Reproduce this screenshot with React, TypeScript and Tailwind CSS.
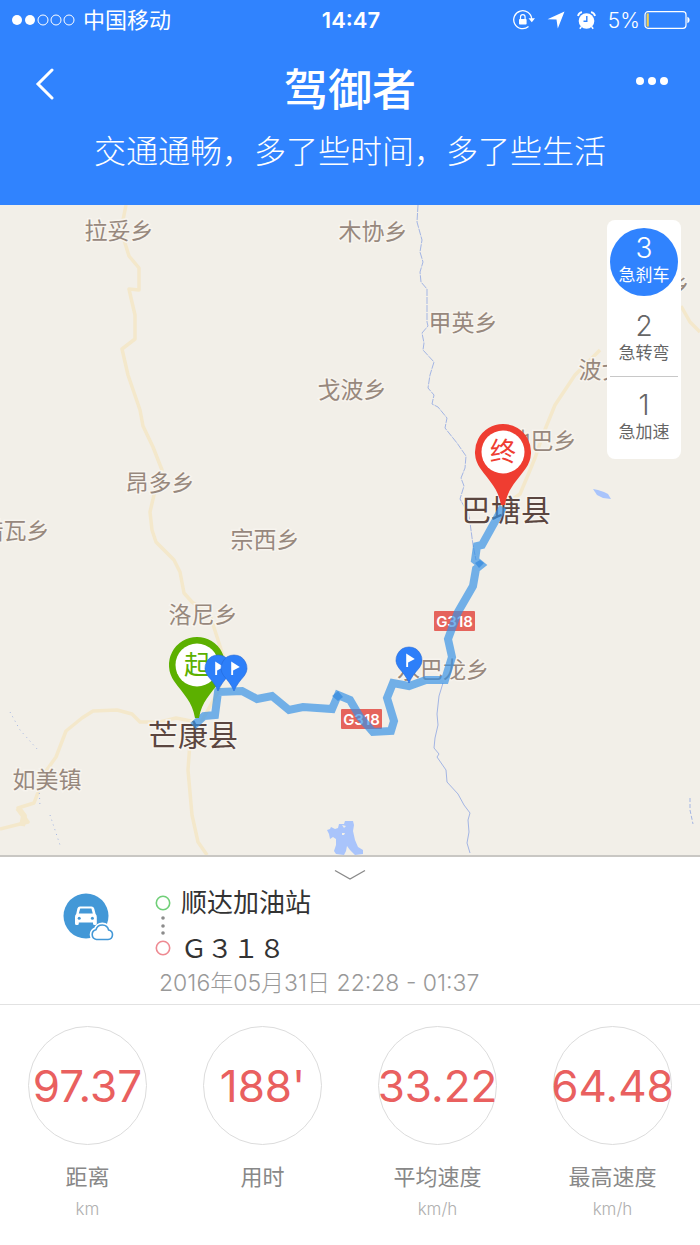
import { useState } from 'react';

const places = [
  { name: '拉妥乡', x: 119, y: 239 },
  { name: '木协乡', x: 373, y: 240 },
  { name: '甲英乡', x: 463, y: 331 },
  { name: '戈波乡', x: 352, y: 398 },
  { name: '波戈乡', x: 613, y: 378 },
  { name: '贡波乡', x: 655, y: 293 },
  { name: '地巴乡', x: 542, y: 449 },
  { name: '昂多乡', x: 160, y: 491 },
  { name: '措瓦乡', x: 15, y: 539 },
  { name: '宗西乡', x: 265, y: 548 },
  { name: '洛尼乡', x: 203, y: 623 },
  { name: '水巴龙乡', x: 443, y: 678 },
  { name: '如美镇', x: 47, y: 788 },
];

const counties = [
  { name: '巴塘县', x: 506, y: 521 },
  { name: '芒康县', x: 193, y: 746 },
];

const events = [
  { count: 3, label: '急刹车' },
  { count: 2, label: '急转弯' },
  { count: 1, label: '急加速' },
];

const stats = [
  { value: '97.37', label: '距离', unit: 'km' },
  { value: "188'", label: '用时', unit: '' },
  { value: '33.22', label: '平均速度', unit: 'km/h' },
  { value: '64.48', label: '最高速度', unit: 'km/h' },
];

function StatusBar() {
  return (
    <div className="grid grid-cols-3 items-center h-10 pl-3 pr-[10px] text-[22px] leading-none">
      <div className="flex items-center gap-2">
        <svg width="63" height="12" viewBox="0 0 63 12" fill="none" stroke="#fff">
          <circle cx="5" cy="6" r="5" fill="#fff" stroke="none" />
          <circle cx="18" cy="6" r="5" fill="#fff" stroke="none" />
          <circle cx="31" cy="6" r="5" />
          <circle cx="44" cy="6" r="5" />
          <circle cx="57" cy="6" r="5" />
        </svg>
        <span>中国移动</span>
      </div>
      <span className="text-center font-semibold">14:47</span>
      <div className="flex items-center justify-end">
        {/* Блокировка поворота */}
        <svg width="22" height="20" viewBox="0 0 22 20" fill="none" stroke="#fff" strokeWidth="1.3">
          <path d="M15.5 16.6 A9 9 0 1 1 18.7 9" />
          <path d="M15.5 8.3 H22 L18.8 12.2 Z" fill="#fff" stroke="none" />
          <rect x="6" y="9" width="7.6" height="5.6" rx="0.8" fill="#fff" stroke="none" />
          <path d="M7.5 9 V7 a2.3 2.3 0 0 1 4.6 0 V9" strokeWidth="1.2" />
        </svg>
        <svg className="ml-3" width="18" height="18" viewBox="0 0 18 18" fill="#fff">
          <path d="M17.5 0.5 L10.8 17.5 L9.5 8.6 L0.5 8.2 Z" />
        </svg>
        {/* Будильник */}
        <svg className="ml-3" width="19" height="19" viewBox="0 0 19 19" fill="none" stroke="#fff">
          <circle cx="9.5" cy="10" r="7.8" fill="#fff" stroke="none" />
          <path d="M9.8 5 V10.3 H6.5" stroke="#3083fe" strokeWidth="1.4" />
          <path d="M1 5 A5 5 0 0 1 5 1.2 M14 1.2 A5 5 0 0 1 18 5" strokeWidth="1.8" />
          <path d="M4.3 15.8 L2.8 17.8 M14.7 15.8 L16.2 17.8" strokeWidth="1.5" />
        </svg>
        <span className="ml-3 text-[21px] font-light">5%</span>
        <svg className="ml-1 shrink-0" width="46" height="18" viewBox="0 0 46 18" fill="none">
          <rect x="1" y="0.7" width="41" height="16.6" rx="3" stroke="#fff" strokeWidth="1.2" />
          <rect x="2.6" y="2.4" width="2.2" height="13.2" fill="#f5d04a" />
          <path d="M43.4 5.8 a3.4 3.4 0 0 1 0 6.4 Z" fill="#fff" />
        </svg>
      </div>
    </div>
  );
}

function Header() {
  return (
    <header className="bg-[#3083fe] text-white h-[205px]">
      <StatusBar />
      <div className="grid grid-cols-[72px_1fr_72px] items-center pt-[14px]">
        <button type="button" aria-label="返回" className="justify-self-end pr-4 pb-3">
          <svg width="22" height="32" viewBox="0 0 22 32" fill="none" stroke="#fff" strokeWidth="3" strokeLinecap="round">
            <path d="M18 2 L4 16 L18 30" />
          </svg>
        </button>
        <h1 className="text-center text-[44px] leading-[72px] font-medium">驾御者</h1>
        <button type="button" aria-label="更多" className="justify-self-start pb-[18px]">
          <svg width="48" height="12" viewBox="0 0 48 12" fill="#fff">
            <circle cx="12" cy="6" r="4" />
            <circle cx="24" cy="6" r="4" />
            <circle cx="36" cy="6" r="4" />
          </svg>
        </button>
      </div>
      <p className="text-center text-[32px] leading-[52px] font-light">交通通畅，多了些时间，多了些生活</p>
    </header>
  );
}

function BigPin({ x, y, color, text }: { x: number; y: number; color: string; text: string }) {
  return (
    <g transform={`translate(${x} ${y})`}>
      <path d="M0 -28 A28 28 0 0 1 23 16 C13 30 5 36 2 53 H-2 C-5 36 -13 30 -23 16 A28 28 0 0 1 0 -28 Z" fill={color} />
      <circle r="21.5" fill="#fff" />
      <text y="9" textAnchor="middle" fontSize="26" fill={color}>{text}</text>
    </g>
  );
}

function FlagPin({ x, y }: { x: number; y: number }) {
  return (
    <g transform={`translate(${x} ${y})`}>
      <path d="M0 -13 A13 13 0 0 1 10.5 7.5 C6 13 3 16 0 23 C-3 16 -6 13 -10.5 7.5 A13 13 0 0 1 0 -13 Z" fill="#2d7ff9" stroke="#2468d8" strokeWidth="0.6" />
      <path d="M-2.8 -6.5 L5.8 -1 L-0.9 2.6 V7 H-2.8 Z" fill="#fff" />
    </g>
  );
}

function RoadSign({ x, y }: { x: number; y: number }) {
  return (
    <g transform={`translate(${x} ${y})`}>
      <rect width="41" height="20" rx="1" fill="#e5645c" />
      <text x="20.5" y="15.5" textAnchor="middle" fontSize="15" fontWeight="600" fill="#fff">G318</text>
    </g>
  );
}

function TripMap() {
  return (
    <svg className="block w-full h-auto" viewBox="0 205 700 650" fill="none" role="img" aria-label="行程地图">
      <rect y="205" width="700" height="650" fill="#f2efe8" />

      {/* Дороги */}
      <g stroke="#f4e8cb" strokeWidth="3.5" strokeLinejoin="round">
        <path d="M126 205 L123 220 L124 240 L129 256 L139 268 L139 290 L129 289 L131 298 L135 315 L135 339 L122 349 L128 375 L140 410 L143 426 L153 447 L162 470 L157 482 L150 512 L152 530 L156 542 L174 560 L180 572 L184 593 L192 602 L210 615 L218 640 L226 665 L218 692 L204 717 L190 742 L188 770 L192 815 L198 842 L207 855" />
        <path d="M196 722 L176 718 L160 722 L140 722 L132 714 L117 710 L93 711 L82 718 L66 731 L56 757 L46 771 L34 803 L18 808 L28 822 L0 829" />
        <path d="M18 808 L24 816 L22 826" strokeWidth="6" />
        <path d="M504 505 L520 494 L528 475 L535 458 L544 432 L555 405 L575 375 L600 350" />
        <path d="M681 306 L690 322 L700 332" />
      </g>

      {/* Реки и озёра */}
      <g stroke="#a3b5e4" strokeWidth="1" strokeLinejoin="round">
        <path d="M418 205 L417 222 L422 240 L420 252 L423 262 L420 272 L421 282 L427 289 L427 322 L428 326 L422 333 L424 343 L423 350 L434 362 L430 375 L428 388 L434 395 L432 404 L438 407 L447 418 L445 428 L457 443 L466 456 L465 468 L461 478 L464 486 L460 499 L469 515 L473 545 L476 560" strokeDasharray="7 1" />
        <path d="M443 683 L439 696 L437 714 L438 725 L435 738 L434 748 L439 754 L437 757 L446 770 L447 782 L458 794 L464 805 L470 813 L468 820 L469 832 L467 843 L470 853" />
        <path d="M690 798 V810 L693 824" strokeDasharray="4 2" />
        <path d="M10 712 L20 730 L38 750 M39 788 L40 806 M50 815 L55 830 L61 848" strokeDasharray="1 4" />
      </g>
      <path
        d="M327 830 L330 829 L331 827 L335 829 L338 828 L339 824 L344 824 L345 821 L353 821 L354 825 L353 831 L355 840 L358 847 L363 850 L363 854 L355 855 L350 850 L347 846 L346 851 L344 855 L336 854 L334 851 L336 845 L336 839 L333 837 L330 839 L329 834 Z"
        fill="#a9c4fb"
      />
      <path d="M342 825 L346 826 L344 828 Z M342 833 L345 833 L344 835 L342 835 Z" fill="#f2efe8" />
      <path d="M593 489 L598 490 L604 492 L608 494 L611 499 L603 498 L597 495 Z" fill="#a9c4fb" />

      <g fontSize="23" textAnchor="middle" fill="#97887d" stroke="#f7f4ee" strokeWidth="3" paintOrder="stroke">
        {places.map((place) => (
          <text key={place.name} x={place.x} y={place.y}>{place.name}</text>
        ))}
      </g>
      <g fontSize="30" textAnchor="middle" fill="#5b4640" stroke="#f7f4ee" strokeWidth="3" paintOrder="stroke">
        {counties.map((county) => (
          <text key={county.name} x={county.x} y={county.y}>{county.name}</text>
        ))}
      </g>
      <RoadSign x={434} y={611} />
      <RoadSign x={341} y={709} />

      <path
        d="M503 507 L482 545 L477 546 L475 560 L481 565 L476 569 L473 586 L458 612 L448 639 L452 657 L445 680 L426 680 L409 686 L393 683 L387 698 L394 721 L391 731 L373 732 L360 717 L350 700 L338 695 L332 709 L303 707 L289 710 L272 696 L257 699 L242 691 L218 692 L215 715 L204 716 L193 726"
        stroke="#3391e6"
        strokeOpacity="0.68"
        strokeWidth="8"
      />
      <path d="M332 696 L338 691 L343 697 L338 701 Z M475 563 L480 560 L484 563 L479 568 Z" fill="#2a82dc" fillOpacity="0.6" />

      <BigPin x={503} y={452} color="#ef3d31" text="终" />
      <BigPin x={197} y={665} color="#5cb000" text="起" />
      <FlagPin x={218} y={668} />
      <FlagPin x={234} y={668} />
      <FlagPin x={409} y={660} />
    </svg>
  );
}

function EventPanel() {
  const [active, setActive] = useState(0);

  return (
    <div className="absolute top-[15px] right-[19px] w-[74px] rounded-lg bg-white px-[3px] pt-2 pb-[6px]">
      {events.map((event, index) => (
        <div key={event.label} className={index === 1 ? 'pt-[10px] pb-[2px] border-b border-[#c8c8c8]' : index === 2 ? 'pt-2' : ''}>
          <button
            type="button"
            onClick={() => setActive(index)}
            className={`flex flex-col items-center w-[68px] h-[68px] pt-[6px] rounded-full ${
              active === index ? 'bg-[#3083fe] text-white' : 'text-[#666]'
            }`}
          >
            <span className="text-[28px] leading-7 font-[350]">{event.count}</span>
            <span className="text-[17px] leading-[26px]">{event.label}</span>
          </button>
        </div>
      ))}
    </div>
  );
}

function CarIcon() {
  return (
    <svg width="52" height="50" viewBox="0 0 52 50" fill="none">
      <circle cx="23" cy="23" r="22.5" fill="#4398d7" />
      <path
        d="M17 13.5 H28.5 Q30.6 13.5 31.2 15.5 L32.6 21 Q33.8 22 33.8 24 V30.5 Q33.8 32 32.3 32 H31.5 Q30 32 30 30.5 V29.5 H15.8 V30.5 Q15.8 32 14.3 32 H13.5 Q12 32 12 30.5 V24 Q12 22 13.2 21 L14.4 15.5 Q15 13.5 17 13.5 Z"
        fill="#fff"
      />
      <path d="M17.2 15.6 H28.4 L29.8 20.6 H15.8 Z" fill="#4398d7" />
      <circle cx="16.2" cy="25.3" r="1.5" fill="#4398d7" />
      <circle cx="29.4" cy="25.3" r="1.5" fill="#4398d7" />
      <g strokeLinejoin="round">
        <path d="M33.5 46.5 a5 5 0 0 1 -0.5 -9.8 a6.5 6.5 0 0 1 12.6 0.3 a4.8 4.8 0 0 1 -0.6 9.5 Z" fill="#fff" stroke="#fff" strokeWidth="5" />
        <path d="M33.5 46.5 a5 5 0 0 1 -0.5 -9.8 a6.5 6.5 0 0 1 12.6 0.3 a4.8 4.8 0 0 1 -0.6 9.5 Z" fill="#fff" stroke="#4398d7" strokeWidth="1.6" />
      </g>
    </svg>
  );
}

function TripInfo() {
  return (
    <section className="border-t-2 border-[#c9c7c3] border-b border-b-[#e2e2e2]">
      <button type="button" aria-label="收起" className="flex justify-center w-full pt-3 pb-1">
        <svg width="32" height="12" viewBox="0 0 32 12" fill="none" stroke="#8a8a8a" strokeWidth="1.4">
          <path d="M1 1.5 L16 10 L31 1.5" />
        </svg>
      </button>
      <div className="flex pl-[63px] pb-[7px]">
        <div className="w-[92px] pt-2">
          <CarIcon />
        </div>
        <div>
          <div className="flex gap-[10px]">
            <svg className="mt-2" width="16" height="64" viewBox="0 0 16 64" fill="none" strokeWidth="1.6">
              <circle cx="8" cy="10" r="6.7" stroke="#70cf78" />
              <circle cx="8" cy="25" r="1.8" fill="#8c8c8c" />
              <circle cx="8" cy="33" r="1.8" fill="#8c8c8c" />
              <circle cx="8" cy="40" r="1.8" fill="#8c8c8c" />
              <circle cx="8" cy="55" r="6.7" stroke="#ee8a92" />
            </svg>
            <div className="text-[26px] text-[#333]">
              <p className="leading-9">顺达加油站</p>
              <p className="mt-2 leading-10">Ｇ３１８</p>
            </div>
          </div>
          <p className="pl-1 text-[23px] leading-7 font-light text-[#999]">2016年05月31日 22:28 - 01:37</p>
        </div>
      </div>
    </section>
  );
}

function Stats() {
  return (
    <section className="grid grid-cols-4 pt-[21px] pb-6">
      {stats.map((stat) => (
        <div key={stat.label} className="flex flex-col items-center">
          <div className="flex items-center justify-center w-[119px] h-[119px] rounded-full border border-[#dcdcdc]">
            <span className="text-[44px] leading-none text-[#e9605f]">{stat.value}</span>
          </div>
          <p className="mt-4 text-[22px] leading-8 text-[#888]">{stat.label}</p>
          <p className="mt-1 text-[17px] leading-6 font-light text-[#b0b0b0]">{stat.unit}</p>
        </div>
      ))}
    </section>
  );
}

export default function App() {
  return (
    <main className="min-h-screen bg-white font-['Inter','Noto_Sans_CJK_SC',sans-serif]">
      <Header />
      <div className="relative">
        <TripMap />
        <EventPanel />
      </div>
      <TripInfo />
      <Stats />
    </main>
  );
}
